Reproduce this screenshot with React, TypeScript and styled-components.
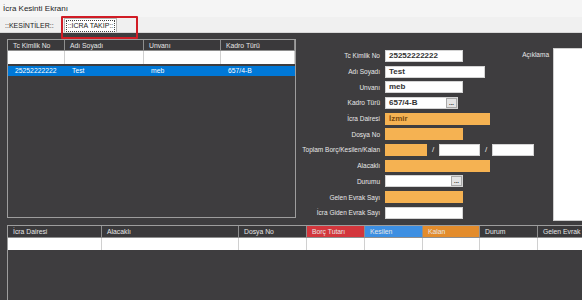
import React from 'react';
import styled, { createGlobalStyle } from 'styled-components';

const GlobalStyle = createGlobalStyle`
  html, body { margin: 0; padding: 0; background: #3e3d3f; }
  body { font-family: "Liberation Sans", Arial, sans-serif; }
  * { box-sizing: border-box; }
`;

const Window = styled.div`
  position: relative;
  width: 582px;
  height: 300px;
  overflow: hidden;
  display: flex;
  flex-direction: column;
  background: #3e3d3f;
`;

const TitleBar = styled.div`
  flex: none;
  height: 17px;
  padding-left: 3px;
  background: #f5f5f5;
  color: #1e1e1e;
  font-size: 8px;
  line-height: 17px;
`;

const TabStrip = styled.div`
  flex: none;
  height: 16px;
  display: flex;
  align-items: flex-end;
  padding-left: 2px;
  background: #f0f0f0;
  border-bottom: 1px solid #d8d8d8;
`;

const Tab = styled.div<{ $active?: boolean }>`
  height: ${(p) => (p.$active ? '14px' : '12px')};
  padding: ${(p) => (p.$active ? '1px 2px 0' : '0 3px')};
  margin-left: ${(p) => (p.$active ? '7px' : '0')};
  background: ${(p) => (p.$active ? '#ffffff' : 'transparent')};
  border: ${(p) => (p.$active ? '1px solid #b4b4b4' : 'none')};
  border-bottom: none;
  color: #222;
  font-size: 7px;
  line-height: 11px;
  white-space: nowrap;
`;

const FocusText = styled.span`
  display: inline-block;
  padding: 0 1px;
  line-height: 10px;
  outline: 1px dotted #444;
`;

const Annotation = styled.div`
  position: absolute;
  left: 61px;
  top: 16px;
  width: 77px;
  height: 23px;
  border: 2px solid #d11c25;
  border-radius: 1px;
  pointer-events: none;
`;

const Body = styled.div`
  flex: 1;
  display: flex;
  flex-direction: column;
  padding: 6px 0 0 7px;
  min-height: 0;
`;

const TopSection = styled.div`
  flex: none;
  height: 182px;
  display: flex;
`;

const DataGrid = styled.div<{ $width?: string; $height?: string }>`
  flex: none;
  width: ${(p) => p.$width || 'auto'};
  height: ${(p) => p.$height || 'auto'};
  border: 1px solid #9d9d9d;
  background: #3e3d3f;
  overflow: hidden;
`;

const GridRow = styled.div<{ $cols: string; $height: number; $bg: string; $mt?: number }>`
  display: grid;
  grid-template-columns: ${(p) => p.$cols};
  height: ${(p) => p.$height}px;
  margin-top: ${(p) => p.$mt || 0}px;
  background: ${(p) => p.$bg};
`;

const HeadCell = styled.div<{ $bg?: string }>`
  padding-left: 5px;
  background: ${(p) => p.$bg || '#3a393b'};
  border-right: 1px solid #8e8e8e;
  border-bottom: 1px solid #8e8e8e;
  color: #e6e6e6;
  font-size: 6.8px;
  line-height: 11px;
  white-space: nowrap;
  overflow: hidden;
`;

const Cell = styled.div<{ $selected?: boolean }>`
  padding-left: 7px;
  border-right: 1px solid ${(p) => (p.$selected ? '#0078d7' : '#d0d0d0')};
  color: ${(p) => (p.$selected ? '#ffffff' : '#222')};
  font-size: 6.8px;
  line-height: 10px;
  white-space: nowrap;
  overflow: hidden;
`;

const Form = styled.div`
  flex: 1;
  margin: 9px 0 0 4px;
  display: grid;
  grid-template-columns: 85px 130px 38px 1fr;
  grid-auto-rows: 15.7px;
`;

const Label = styled.div`
  grid-column: 1;
  align-self: center;
  padding-right: 5px;
  text-align: right;
  color: #e8e8e8;
  font-size: 6.5px;
  white-space: nowrap;
`;

const Field = styled.div<{ $span?: boolean }>`
  grid-column: ${(p) => (p.$span ? '2 / 4' : '2')};
  display: flex;
  align-items: center;
`;

const InputBox = styled.div<{ $w: number; $tone?: 'orange' | 'white' }>`
  position: relative;
  flex: none;
  width: ${(p) => p.$w}px;
  height: 12px;
  padding-left: 3px;
  background: ${(p) => (p.$tone === 'orange' ? '#f5b252' : '#ffffff')};
  border: 1px solid ${(p) => (p.$tone === 'orange' ? '#f5b252' : '#d4d4d4')};
  color: ${(p) => (p.$tone === 'orange' ? '#7a4a10' : '#333')};
  font-size: 8px;
  font-weight: bold;
  line-height: 10px;
  white-space: nowrap;
`;

const DotsButton = styled.div`
  position: absolute;
  right: 0;
  top: 0;
  width: 11px;
  height: 10px;
  background: #e4e4e4;
  border: 1px solid #a8a8a8;
  color: #111;
  font-size: 6px;
  font-weight: bold;
  line-height: 9px;
  text-align: center;
`;

const Slash = styled.span`
  flex: none;
  width: 12px;
  text-align: center;
  color: #e8e8e8;
  font-size: 8px;
`;

const AciklamaLabel = styled.div`
  grid-column: 3;
  grid-row: 1;
  align-self: start;
  padding: 3px 4px 0 0;
  text-align: right;
  color: #e8e8e8;
  font-size: 6.5px;
  white-space: nowrap;
`;

const TextArea = styled.div`
  grid-column: 4;
  grid-row: 1 / span 11;
  background: #ffffff;
  border: 1px solid #cfcfcf;
  border-right: none;
`;

const BottomGrid = styled.div`
  flex: 1;
  margin-top: 4px;
  width: 620px;
  border-left: 1px solid #9d9d9d;
  border-top: 1px solid #9d9d9d;
`;

const topCols = '57px 79px 77px 1fr';
const topHeads = ['Tc Kimlik No', 'Adı Soyadı', 'Unvanı', 'Kadro Türü'];
const topRow = ['25252222222', 'Test', 'meb', '657/4-B'];

const bottomCols = '94px 137px 68px 58px 58px 57px 58px 1fr';
const bottomHeads: { t: string; bg?: string }[] = [
  { t: 'İcra Dairesi' },
  { t: 'Alacaklı' },
  { t: 'Dosya No' },
  { t: 'Borç Tutarı', bg: '#d3363c' },
  { t: 'Kesilen', bg: '#3d8fe2' },
  { t: 'Kalan', bg: '#e38c2c' },
  { t: 'Durum' },
  { t: 'Gelen Evrak Sayı' },
];

export default function App() {
  return (
    <Window>
      <GlobalStyle />
      <TitleBar>İcra Kesinti Ekranı</TitleBar>
      <TabStrip>
        <Tab>::KESİNTİLER::</Tab>
        <Tab $active>
          <FocusText>::İCRA TAKİP::</FocusText>
        </Tab>
      </TabStrip>
      <Annotation />
      <Body>
        <TopSection>
          <DataGrid $width="289px" $height="179px">
            <GridRow $cols={topCols} $height={11} $bg="#3a393b">
              {topHeads.map((h) => (
                <HeadCell key={h}>{h}</HeadCell>
              ))}
            </GridRow>
            <GridRow $cols={topCols} $height={13} $bg="#ffffff">
              {topHeads.map((h) => (
                <Cell key={h} />
              ))}
            </GridRow>
            <GridRow $cols={topCols} $height={10} $bg="#0078d7" $mt={2}>
              {topRow.map((v) => (
                <Cell key={v} $selected>
                  {v}
                </Cell>
              ))}
            </GridRow>
          </DataGrid>
          <Form>
            <Label>Tc Kimlik No</Label>
            <Field>
              <InputBox $w={78}>25252222222</InputBox>
            </Field>
            <AciklamaLabel>Açıklama</AciklamaLabel>
            <TextArea />
            <Label>Adı Soyadı</Label>
            <Field>
              <InputBox $w={100}>Test</InputBox>
            </Field>
            <Label>Unvanı</Label>
            <Field>
              <InputBox $w={78}>meb</InputBox>
            </Field>
            <Label>Kadro Türü</Label>
            <Field>
              <InputBox $w={73}>
                657/4-B
                <DotsButton>...</DotsButton>
              </InputBox>
            </Field>
            <Label>İcra Dairesi</Label>
            <Field>
              <InputBox $w={105} $tone="orange">İzmir</InputBox>
            </Field>
            <Label>Dosya No</Label>
            <Field>
              <InputBox $w={78} $tone="orange" />
            </Field>
            <Label>Toplam Borç/Kesilen/Kalan</Label>
            <Field $span>
              <InputBox $w={42} $tone="orange" />
              <Slash>/</Slash>
              <InputBox $w={41} />
              <Slash>/</Slash>
              <InputBox $w={42} />
            </Field>
            <Label>Alacaklı</Label>
            <Field>
              <InputBox $w={105} $tone="orange" />
            </Field>
            <Label>Durumu</Label>
            <Field>
              <InputBox $w={78}>
                <DotsButton>...</DotsButton>
              </InputBox>
            </Field>
            <Label>Gelen Evrak Sayı</Label>
            <Field>
              <InputBox $w={78} $tone="orange" />
            </Field>
            <Label>İcra Giden Evrak Sayı</Label>
            <Field>
              <InputBox $w={78} />
            </Field>
          </Form>
        </TopSection>
        <BottomGrid>
          <GridRow $cols={bottomCols} $height={12} $bg="#3a393b">
            {bottomHeads.map((h) => (
              <HeadCell key={h.t} $bg={h.bg}>
                {h.t}
              </HeadCell>
            ))}
          </GridRow>
          <GridRow $cols={bottomCols} $height={12} $bg="#ffffff">
            {bottomHeads.map((h) => (
              <Cell key={h.t} />
            ))}
          </GridRow>
        </BottomGrid>
      </Body>
    </Window>
  );
}
